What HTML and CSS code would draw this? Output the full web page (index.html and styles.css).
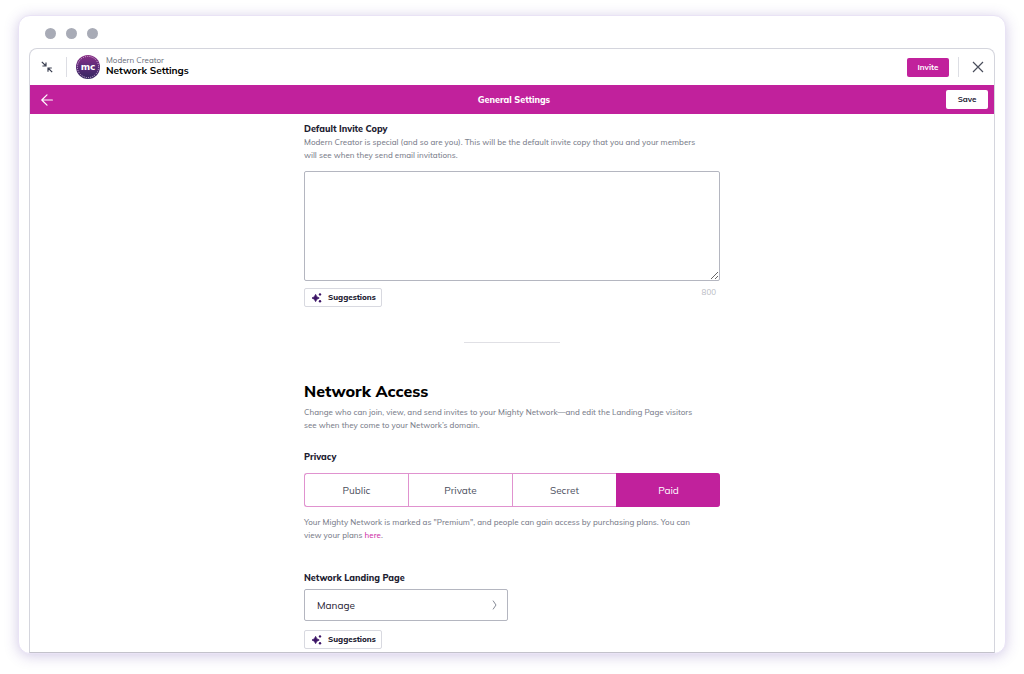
FILE: index.html
```html
<!DOCTYPE html>
<html lang="en">
<head>
    <meta charset="UTF-8">
    <meta name="viewport" content="width=device-width, initial-scale=1.0">
    <title>Network Settings</title>
    <link rel="stylesheet" href="styles.css">
</head>
<body>
    <div class="window">
        <div class="window-dots">
            <span class="dot"></span>
            <span class="dot"></span>
            <span class="dot"></span>
        </div>
        <div class="screen">
            <header class="topbar">
                <button class="icon-btn" type="button" aria-label="Collapse">
                    <svg width="12" height="12" viewBox="0 0 12 12" fill="none" stroke="#3c4152" stroke-width="1.2">
                        <path d="M0.8 0.8L5 5M5 1.4V5H1.4M11.2 11.2L7 7M7 10.8V7H10.8"/>
                    </svg>
                </button>
                <span class="separator"></span>
                <svg class="logo" width="24" height="24" viewBox="0 0 24 24" aria-hidden="true">
                    <defs>
                        <linearGradient id="logo-fill" x1="0" y1="0" x2="0" y2="1">
                            <stop offset="0" stop-color="#8a2f86"/>
                            <stop offset="0.5" stop-color="#5a2a78"/>
                            <stop offset="1" stop-color="#33275f"/>
                        </linearGradient>
                    </defs>
                    <circle cx="12" cy="12" r="12" fill="url(#logo-fill)"/>
                    <circle cx="12" cy="12" r="10.6" fill="none" stroke="#d9bcdd" stroke-width="1" stroke-dasharray="1 1.22"/>
                    <text class="logo-text" x="12" y="15" text-anchor="middle">mc</text>
                </svg>
                <div class="titles">
                    <p class="network-name">Modern Creator</p>
                    <h1>Network Settings</h1>
                </div>
                <button class="btn btn-invite" type="button">Invite</button>
                <span class="separator"></span>
                <button class="icon-btn" type="button" aria-label="Close">
                    <svg width="12" height="12" viewBox="0 0 12 12" fill="none" stroke="#4a4e5c" stroke-width="1.2">
                        <path d="M1 1L11 11M11 1L1 11"/>
                    </svg>
                </button>
            </header>

            <div class="subbar">
                <button class="icon-btn" type="button" aria-label="Back">
                    <svg width="12" height="12" viewBox="0 0 12 12" fill="none" stroke="#fff" stroke-width="1.2" stroke-linecap="round" stroke-linejoin="round">
                        <path d="M11.4 6H0.8M6 0.8L0.8 6L6 11.2"/>
                    </svg>
                </button>
                <h2>General Settings</h2>
                <button class="btn btn-save" type="button">Save</button>
            </div>

            <main class="settings">
                <section>
                    <label class="field-label" for="invite-copy">Default Invite Copy</label>
                    <p class="help">Modern Creator is special (and so are you). This will be the default invite copy that you and your members<br>will see when they send email invitations.</p>
                    <textarea class="invite-copy" id="invite-copy" maxlength="800"></textarea>
                    <div class="field-footer">
                        <button class="btn btn-suggest" type="button">
                            <svg width="10" height="10" viewBox="0 0 10 10" fill="#3b1466" aria-hidden="true">
                                <path d="M3.6 1.4Q4.3 4.3 7.2 5Q4.3 5.7 3.6 8.6Q2.9 5.7 0 5Q2.9 4.3 3.6 1.4Z" stroke="#3b1466" stroke-width="0.8"/>
                                <circle cx="8" cy="1.4" r="1.2"/>
                                <circle cx="8" cy="8.2" r="1.2"/>
                            </svg>
                            Suggestions
                        </button>
                        <span class="counter">800</span>
                    </div>
                </section>

                <hr class="divider">

                <section>
                    <h2 class="section-title">Network Access</h2>
                    <p class="help">Change who can join, view, and send invites to your Mighty Network—and edit the Landing Page visitors<br>see when they come to your Network’s domain.</p>

                    <h3 class="field-label privacy-label" id="privacy-label">Privacy</h3>
                    <div class="segments" role="group" aria-labelledby="privacy-label">
                        <button class="segment" type="button">Public</button>
                        <button class="segment" type="button">Private</button>
                        <button class="segment" type="button">Secret</button>
                        <button class="segment active" type="button" aria-pressed="true">Paid</button>
                    </div>
                    <p class="help">Your Mighty Network is marked as "Premium", and people can gain access by purchasing plans. You can<br>view your plans <a href="#plans">here</a>.</p>

                    <h3 class="field-label landing-label">Network Landing Page</h3>
                    <button class="manage" type="button">
                        Manage
                        <svg width="5" height="10" viewBox="0 0 5 10" fill="none" stroke="#868a96" aria-hidden="true">
                            <path d="M1 0.6L4 5L1 9.4"/>
                        </svg>
                    </button>
                    <button class="btn btn-suggest" type="button">
                        <svg width="10" height="10" viewBox="0 0 10 10" fill="#3b1466" aria-hidden="true">
                            <path d="M3.6 1.4Q4.3 4.3 7.2 5Q4.3 5.7 3.6 8.6Q2.9 5.7 0 5Q2.9 4.3 3.6 1.4Z" stroke="#3b1466" stroke-width="0.8"/>
                            <circle cx="8" cy="1.4" r="1.2"/>
                            <circle cx="8" cy="8.2" r="1.2"/>
                        </svg>
                        Suggestions
                    </button>
                </section>
            </main>
        </div>
    </div>
</body>
</html>
```
FILE: styles.css
```css
* {
    box-sizing: border-box;
    margin: 0;
    padding: 0;
}

body {
    font-family: Mulish, Muli, "Open Sans", sans-serif;
    font-size: 9px;
    line-height: 13px;
    color: #1c2030;
    background: #fff;
    padding: 15px 18px 20px;
}

button,
textarea {
    font: inherit;
    color: inherit;
}

button {
    cursor: pointer;
}

.window {
    padding: 0 10px;
    background: #fff;
    border: 1px solid #e9e3f5;
    border-radius: 12px;
    box-shadow: 0 2px 14px rgba(80, 50, 160, 0.26);
}

.window-dots {
    display: flex;
    align-items: center;
    gap: 10px;
    height: 32px;
    padding: 2px 16px 0;
}

.dot {
    width: 11px;
    height: 11px;
    border-radius: 50%;
    background: #a8abb6;
}

.screen {
    border: 1px solid #d4d5dd;
    border-bottom-color: #c3c2cb;
    border-radius: 8px 8px 0 0;
    overflow: hidden;
}

/* header */
.topbar {
    display: flex;
    align-items: center;
    height: 36px;
    padding: 0 9px 0 10px;
}

.icon-btn {
    display: flex;
    padding: 1px;
    background: none;
    border: none;
}

.separator {
    width: 1px;
    height: 20px;
    margin: 0 12px;
    background: #dddee4;
}

.logo {
    margin-right: 6px;
    margin-left: -3px;
}

.logo-text {
    font-family: "DejaVu Sans", sans-serif;
    font-size: 9px;
    font-weight: 700;
    fill: #fff;
}

.titles {
    flex: 1;
    padding-bottom: 4px;
}

.network-name {
    font-size: 8px;
    line-height: 10px;
    color: #6b6f7c;
}

h1 {
    font-size: 10px;
    line-height: 11px;
    font-weight: 700;
    color: #000;
}

.btn {
    font-size: 8px;
    font-weight: 700;
    border: none;
    border-radius: 2px;
}

.btn-invite {
    height: 19px;
    width: 42px;
    margin-right: -3px;
    color: #fff;
    background: #c1219c;
}

.subbar {
    display: grid;
    grid-template-columns: 1fr auto 1fr;
    align-items: center;
    height: 29px;
    padding: 0 6px 0 10px;
    color: #fff;
    background: #c1219c;
}

.subbar h2 {
    font-size: 9px;
    font-weight: 800;
}

.btn-save {
    justify-self: end;
    width: 42px;
    height: 19px;
    color: #1c2030;
    background: #fff;
}

/* settings column */
.settings {
    max-width: 416px;
    margin: 0 auto;
    padding: 8px 0 3px;
}

.field-label {
    display: block;
    font-size: 9px;
    line-height: 14px;
    font-weight: 800;
}

.help {
    font-size: 8px;
    font-weight: 500;
    color: #7d818d;
}

.help a {
    color: #cf35aa;
    text-decoration: none;
}

.invite-copy {
    display: block;
    width: 100%;
    height: 110px;
    margin-top: 9px;
    padding: 8px;
    border: 1px solid #b4b6c0;
    border-radius: 2px;
    resize: vertical;
}

.field-footer {
    display: flex;
    justify-content: space-between;
    margin-top: 7px;
}

.btn-suggest {
    display: flex;
    align-items: center;
    gap: 6px;
    height: 19px;
    padding: 0 5px 0 7px;
    font-weight: 800;
    background: #fff;
    border: 1px solid #d8d9e0;
}

.counter {
    font-size: 8px;
    line-height: 8px;
    padding-right: 4px;
    color: #b7b9c2;
}

.divider {
    width: 96px;
    margin: 35px auto 38px;
    border: none;
    border-top: 1px solid #e0e0e5;
}

.section-title {
    margin-bottom: 5px;
    font-size: 16px;
    line-height: 20px;
    font-weight: 800;
    color: #000;
}

.privacy-label {
    margin-top: 18px;
    margin-bottom: 9px;
}

.segments {
    display: flex;
    height: 34px;
    margin-bottom: 9px;
}

.segment {
    flex: 1;
    font-size: 10px;
    background: #fff;
    border: 1px solid #e092cf;
    border-right: none;
    color: #4a4e5c;
}

.segment:first-child {
    border-radius: 3px 0 0 3px;
}

.segment:last-child {
    border-radius: 0 3px 3px 0;
}

.segment.active {
    color: #fff;
    background: #c1219c;
    border-color: #c1219c;
}

.landing-label {
    margin-top: 29px;
    margin-bottom: 4px;
}

.manage {
    display: flex;
    align-items: center;
    justify-content: space-between;
    width: 204px;
    height: 32px;
    margin-bottom: 9px;
    padding: 0 10px 0 12px;
    font-size: 10px;
    background: #fff;
    border: 1px solid #b4b6c0;
    border-radius: 2px;
}
```
